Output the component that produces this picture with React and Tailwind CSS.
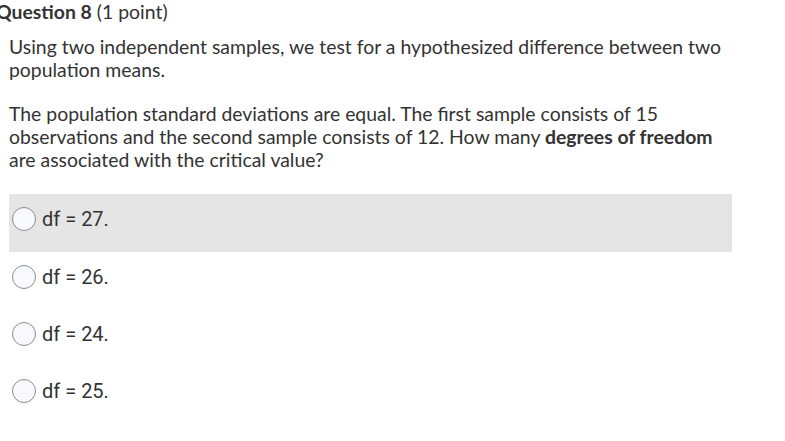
const options = ['df = 27.', 'df = 26.', 'df = 24.', 'df = 25.']

export default function App() {
  return (
    <div className="w-[785px] h-[441px] bg-white overflow-hidden text-[#333] font-['Lato',sans-serif]">
      {/* Header */}
      <div className="ml-[-4px] h-[30px] text-[19.4px] leading-[24px] whitespace-nowrap">
        <span className="font-bold">Question 8</span> (1 point)
      </div>

      {/* Question text */}
      <div className="pl-[9px] pt-[5px] text-[19.4px] leading-[23px]">
        <p className="whitespace-nowrap">
          Using two independent samples, we test for a hypothesized difference between two
          <br />
          population means.
        </p>
        <p className="mt-[21px] whitespace-nowrap">
          The population standard deviations are equal. The first sample consists of 15
          <br />
          observations and the second sample consists of 12. How many{' '}
          <span className="font-bold">degrees of freedom</span>
          <br />
          are associated with the critical value?
        </p>
      </div>

      {/* Answers */}
      <ul className="mt-[23px] ml-[9px] w-[723px]">
        {options.map((opt, i) => (
          <li
            key={opt}
            className={i === 0 ? 'h-[58px] pt-[13px] pl-[3px] bg-[#e5e5e5]' : 'h-[57px] pt-[13px] pl-[3px]'}
          >
            <div className="flex items-center gap-[6px] h-[24px]">
              <span className="w-[24px] h-[24px] rounded-full border border-[#8c8c8c] bg-[#f7f9fc] shrink-0" />
              <span className="font-['Roboto',sans-serif] text-[20px] leading-[24px] text-[#333]">{opt}</span>
            </div>
          </li>
        ))}
      </ul>
    </div>
  )
}
